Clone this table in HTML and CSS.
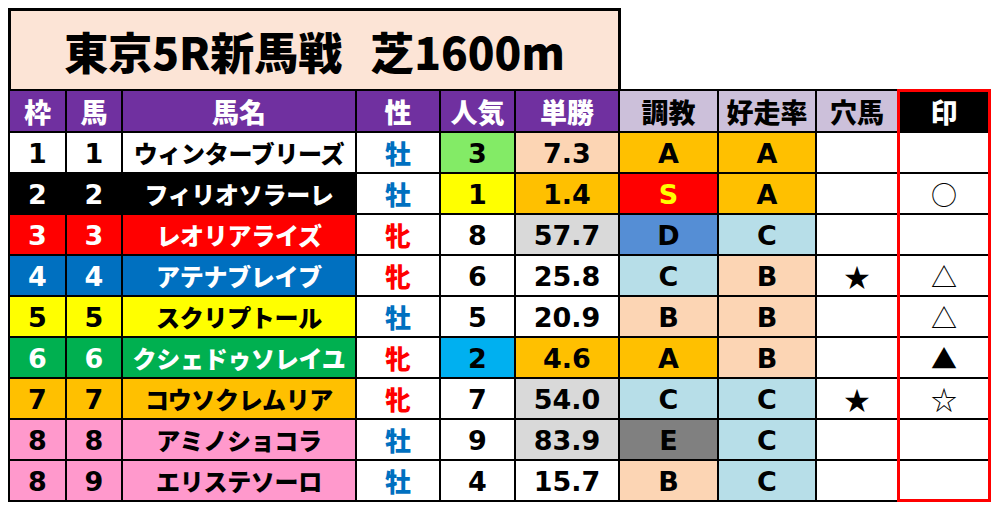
FILE: index.html
```html
<!DOCTYPE html>
<html lang="ja">
<head>
<meta charset="utf-8">
<title>東京5R新馬戦</title>
<link rel="stylesheet" href="styles.css">
</head>
<body>
<div class="page">
  <div class="title"><span>東京5R新馬戦</span><span class="gap"></span><span>芝1600m</span></div>
  <div class="sheet">
    <div class="grid">
      <div class="c h">枠</div>
      <div class="c h">馬</div>
      <div class="c h">馬名</div>
      <div class="c h">性</div>
      <div class="c h">人気</div>
      <div class="c h">単勝</div>
      <div class="c h2">調教</div>
      <div class="c h2">好走率</div>
      <div class="c h2">穴馬</div>
      <div class="c h3">印</div>

      <div class="c f1">1</div><div class="c f1">1</div><div class="c f1 name">ウィンターブリーズ</div>
      <div class="c sex m">牡</div><div class="c lgreen">3</div><div class="c peach">7.3</div>
      <div class="c orange">A</div><div class="c orange">A</div><div class="c"></div><div class="c mark"></div>

      <div class="c f2">2</div><div class="c f2">2</div><div class="c f2 name">フィリオソラーレ</div>
      <div class="c sex m">牡</div><div class="c yellow">1</div><div class="c orange">1.4</div>
      <div class="c red ytext">S</div><div class="c orange">A</div><div class="c"></div><div class="c mark">○</div>

      <div class="c f3">3</div><div class="c f3">3</div><div class="c f3 name">レオリアライズ</div>
      <div class="c sex f">牝</div><div class="c">8</div><div class="c gray">57.7</div>
      <div class="c dblue">D</div><div class="c lblue">C</div><div class="c"></div><div class="c mark"></div>

      <div class="c f4">4</div><div class="c f4">4</div><div class="c f4 name">アテナブレイブ</div>
      <div class="c sex f">牝</div><div class="c">6</div><div class="c">25.8</div>
      <div class="c lblue">C</div><div class="c peach">B</div><div class="c mark">★</div><div class="c mark">△</div>

      <div class="c f5">5</div><div class="c f5">5</div><div class="c f5 name">スクリプトール</div>
      <div class="c sex m">牡</div><div class="c">5</div><div class="c">20.9</div>
      <div class="c peach">B</div><div class="c peach">B</div><div class="c"></div><div class="c mark">△</div>

      <div class="c f6">6</div><div class="c f6">6</div><div class="c f6 name">クシェドゥソレイユ</div>
      <div class="c sex f">牝</div><div class="c cyan">2</div><div class="c orange">4.6</div>
      <div class="c orange">A</div><div class="c peach">B</div><div class="c"></div><div class="c mark">▲</div>

      <div class="c f7">7</div><div class="c f7">7</div><div class="c f7 name">コウソクレムリア</div>
      <div class="c sex f">牝</div><div class="c">7</div><div class="c gray">54.0</div>
      <div class="c lblue">C</div><div class="c lblue">C</div><div class="c mark">★</div><div class="c mark">☆</div>

      <div class="c f8">8</div><div class="c f8">8</div><div class="c f8 name">アミノショコラ</div>
      <div class="c sex m">牡</div><div class="c">9</div><div class="c gray">83.9</div>
      <div class="c dgray">E</div><div class="c lblue">C</div><div class="c"></div><div class="c mark"></div>

      <div class="c f8">8</div><div class="c f8">9</div><div class="c f8 name">エリステソーロ</div>
      <div class="c sex m">牡</div><div class="c">4</div><div class="c">15.7</div>
      <div class="c peach">B</div><div class="c lblue">C</div><div class="c"></div><div class="c mark"></div>
    </div>
    <div class="redbox"></div>
  </div>
</div>
</body>
</html>
```
FILE: styles.css
```css
html, body {
  margin: 0;
  padding: 0;
  background: #ffffff;
}
.page {
  padding: 8px 0 0 8px;
  font-family: "DejaVu Sans", "Noto Sans CJK JP", sans-serif;
  font-weight: bold;
}
.title {
  box-sizing: border-box;
  width: 613px;
  height: 81px;
  border: 3px solid #000;
  border-bottom: none;
  background: #FCE4D6;
  display: flex;
  align-items: center;
  justify-content: center;
  font-family: "Noto Sans CJK JP", sans-serif;
  font-size: 44px;
  font-weight: 900;
  color: #000;
  padding: 2px 0 0 0;
  white-space: nowrap;
}
.title .gap {
  width: 28px;
}
.sheet {
  position: relative;
  width: 983px;
}
.grid {
  display: grid;
  grid-template-columns: 55px 54px 232px 82px 73px 102px 97px 96px 80px 90px;
  grid-template-rows: 40px repeat(9, 39px);
  gap: 2px;
  padding: 2px;
  background: #000;
}
.c {
  background: #fff;
  color: #000;
  display: flex;
  align-items: center;
  justify-content: center;
  font-size: 27px;
  line-height: 1;
  white-space: nowrap;
  padding-top: 1px;
}
.h, .h2, .h3 {
  font-family: "Noto Sans CJK JP", sans-serif;
  font-size: 27px;
  font-weight: 900;
}
.h {
  background: #7030A0;
  color: #fff;
}
.h2 {
  background: #CCC0DA;
  color: #000;
}
.h3 {
  background: #000;
  color: #fff;
}
.name {
  font-family: "Noto Sans CJK JP", sans-serif;
  font-size: 24px;
  font-weight: 900;
  letter-spacing: -0.3px;
}
.sex {
  font-family: "Noto Sans CJK JP", sans-serif;
  font-size: 26px;
  font-weight: 900;
}
.sex.m { color: #0070C0; }
.sex.f { color: #FF0000; }
.mark {
  font-family: "Noto Sans CJK JP", sans-serif;
  font-weight: normal;
  font-size: 26px;
}
.f1 { background: #fff; color: #000; }
.f2 { background: #000; color: #fff; }
.f3 { background: #FF0000; color: #fff; }
.f4 { background: #0070C0; color: #fff; }
.f5 { background: #FFFF00; color: #000; }
.f6 { background: #00B050; color: #fff; }
.f7 { background: #FFC000; color: #000; }
.f8 { background: #FF99CC; color: #000; }
.lgreen { background: #83EB66; }
.yellow { background: #FFFF00; }
.cyan { background: #00B0F0; }
.peach { background: #FCD5B4; }
.orange { background: #FFC000; }
.gray { background: #D9D9D9; }
.red { background: #FF0000; }
.ytext { color: #FFFF00; }
.dblue { background: #558ED5; }
.lblue { background: #B7DEE8; }
.dgray { background: #808080; }
.redbox {
  position: absolute;
  top: 0;
  bottom: 0;
  right: 0;
  width: 94px;
  box-sizing: border-box;
  border: 3px solid #FF0000;
  pointer-events: none;
}
```
